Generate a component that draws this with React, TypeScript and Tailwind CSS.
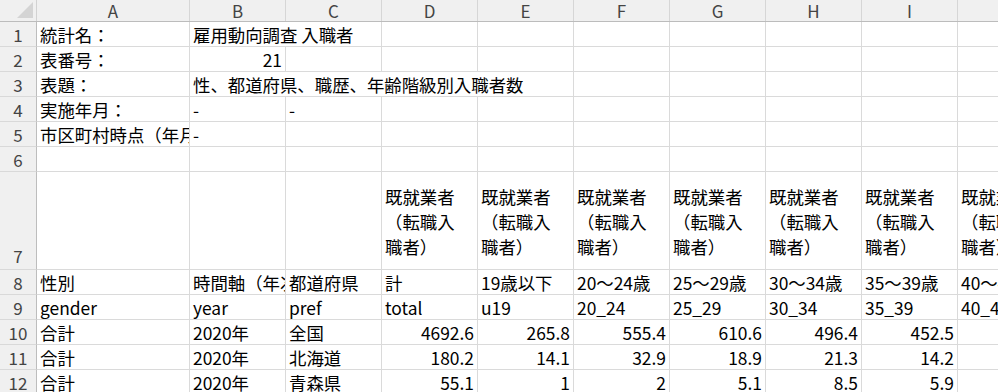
import React from 'react';

// column widths (incl. right grid line): A..J
const colWidths = [153, 96, 96, 96, 96, 96, 96, 96, 96, 96];
const colLetters = ['A', 'B', 'C', 'D', 'E', 'F', 'G', 'H', 'I', 'J'];

type CellSpec = { text?: string; span?: number; num?: boolean };

const header7 = '既就業者\n（転職入\n職者）';

const rows: { h: 'normal' | 'tall'; cells: CellSpec[] }[] = [
  { h: 'normal', cells: [{ text: '統計名：' }, { text: '雇用動向調査 入職者', span: 2 }] },
  { h: 'normal', cells: [{ text: '表番号：' }, { text: '21', num: true }] },
  { h: 'normal', cells: [{ text: '表題：' }, { text: '性、都道府県、職歴、年齢階級別入職者数', span: 4 }] },
  { h: 'normal', cells: [{ text: '実施年月：' }, { text: '-' }, { text: '-' }] },
  { h: 'normal', cells: [{ text: '市区町村時点（年月日）：' }, { text: '-' }] },
  { h: 'normal', cells: [] },
  {
    h: 'tall',
    cells: [{}, {}, {}, ...Array.from({ length: 7 }, () => ({ text: header7 }))],
  },
  {
    h: 'normal',
    cells: ['性別', '時間軸（年次）', '都道府県', '計', '19歳以下', '20～24歳', '25～29歳', '30～34歳', '35～39歳', '40～44歳'].map(
      (t) => ({ text: t }),
    ),
  },
  {
    h: 'normal',
    cells: ['gender', 'year', 'pref', 'total', 'u19', '20_24', '25_29', '30_34', '35_39', '40_44'].map((t) => ({ text: t })),
  },
  {
    h: 'normal',
    cells: [
      { text: '合計' },
      { text: '2020年' },
      { text: '全国' },
      ...['4692.6', '265.8', '555.4', '610.6', '496.4', '452.5', '462.3'].map((t) => ({ text: t, num: true })),
    ],
  },
  {
    h: 'normal',
    cells: [
      { text: '合計' },
      { text: '2020年' },
      { text: '北海道' },
      ...['180.2', '14.1', '32.9', '18.9', '21.3', '14.2', '15.8'].map((t) => ({ text: t, num: true })),
    ],
  },
  {
    h: 'normal',
    cells: [
      { text: '合計' },
      { text: '2020年' },
      { text: '青森県' },
      ...['55.1', '1', '2', '5.1', '8.5', '5.9', '4.4'].map((t) => ({ text: t, num: true })),
    ],
  },
];

function expand(cells: CellSpec[]) {
  // fill to 10 columns, merging overflow spans
  const out: { spec: CellSpec; width: number }[] = [];
  let col = 0;
  for (const c of cells) {
    const span = c.span ?? 1;
    const width = colWidths.slice(col, col + span).reduce((a, b) => a + b, 0);
    out.push({ spec: c, width });
    col += span;
  }
  while (col < colWidths.length) {
    out.push({ spec: {}, width: colWidths[col] });
    col += 1;
  }
  return out;
}

function Row({ index, tall, cells }: { index: number; tall: boolean; cells: CellSpec[] }) {
  return (
    <div className={`flex shrink-0 ${tall ? 'h-[98px]' : 'h-[25px]'}`}>
      <div
        className={`w-[37px] shrink-0 flex justify-center bg-[#f0f0f0] text-[#444] text-[17px] border-r border-b border-r-[#bdbdbd] border-b-[#d9d9d9] ${
          tall ? 'items-end pb-[1px]' : 'items-center'
        }`}
      >
        {index}
      </div>
      {expand(cells).map(({ spec, width }, i) => (
        <div
          key={i}
          style={{ width }}
          className={`shrink-0 overflow-hidden whitespace-nowrap border-r border-b border-[#dadada] ${
            tall ? 'flex flex-col justify-end pb-[10px] whitespace-pre-line leading-[25px] pl-[3px]' : 'flex items-center'
          } ${spec.num ? 'justify-end pr-[3px]' : tall ? '' : 'pl-[3px]'}`}
        >
          {spec.text}
        </div>
      ))}
    </div>
  );
}

export default function App() {
  return (
    <div className="w-[998px] h-[392px] overflow-hidden bg-white text-black font-['Noto_Sans_CJK_JP','Noto_Sans',sans-serif] text-[17.4px] leading-[25px]">
      <div className="flex flex-col w-max">
        {/* column header */}
        <div className="flex h-[22px] shrink-0 bg-[#f0f0f0] text-[#444] text-[17px] border-b border-[#bcbcbc]">
          <div className="w-[37px] shrink-0 border-r border-[#d2d2d2] relative">
            <svg className="absolute right-[3px] bottom-[3px]" width="16" height="16" viewBox="0 0 16 16">
              <polygon points="16,0 16,16 0,16" fill="#d4d4d4" />
            </svg>
          </div>
          {colLetters.map((l, i) => (
            <div
              key={l}
              style={{ width: colWidths[i] }}
              className="shrink-0 flex items-center justify-center border-r border-[#d6d6d6] leading-[21px]"
            >
              {l}
            </div>
          ))}
        </div>
        {rows.map((r, i) => (
          <Row key={i} index={i + 1} tall={r.h === 'tall'} cells={r.cells} />
        ))}
      </div>
    </div>
  );
}
